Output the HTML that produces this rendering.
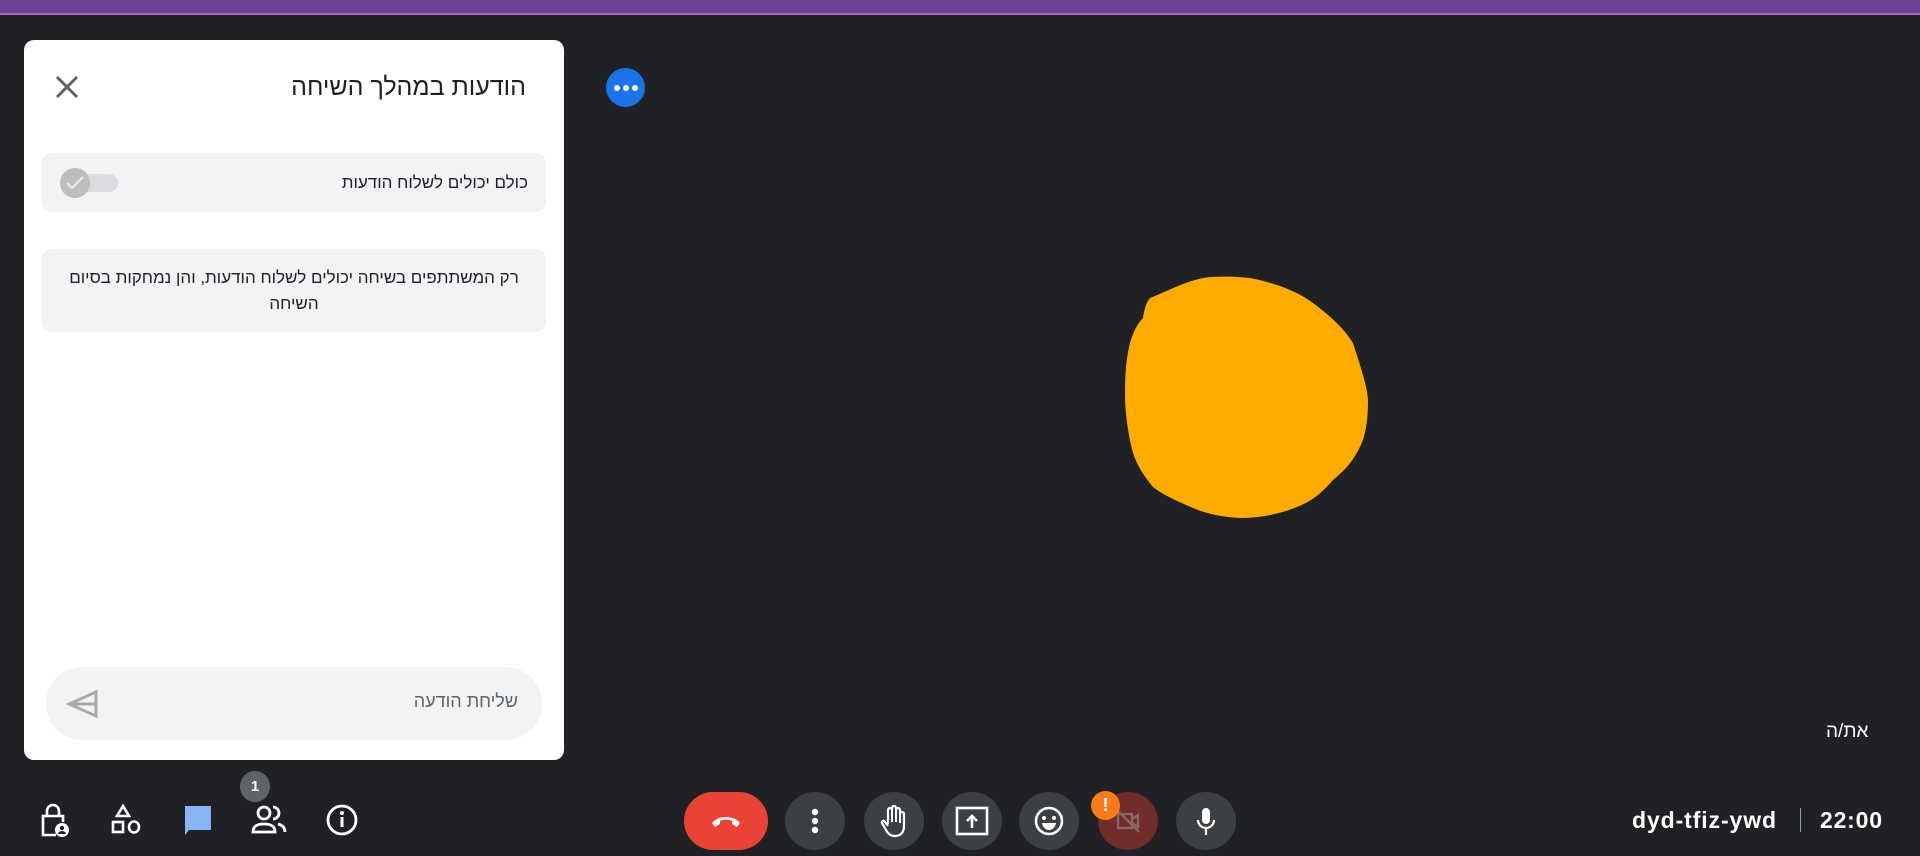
<!DOCTYPE html>
<html><head><meta charset="utf-8"><style>
*{margin:0;padding:0;box-sizing:border-box}
body{width:1920px;height:856px;background:#202124;position:relative;overflow:hidden;font-family:"Liberation Sans","Noto Sans CJK SC",sans-serif}
.top{position:absolute;left:0;top:0;width:1920px;height:15px;background:#6e4397;border-bottom:2px solid #9b6cc4}
.panel{position:absolute;left:24px;top:40px;width:540px;height:720px;background:#fff;border-radius:10px}
.title{position:absolute;right:38px;top:33px;font-size:25px;color:#202124;direction:rtl}
.card{position:absolute;background:#f1f3f4;border-radius:10px;direction:rtl;color:#202124}
.abs{position:absolute}
.cb{position:absolute;top:792px;width:60px;height:58px;border-radius:50%;background:#3c4043;display:flex;align-items:center;justify-content:center}
.li{position:absolute;top:800px;width:40px;height:40px;display:flex;align-items:center;justify-content:center}
</style></head><body>
<div class="top"></div>
<div class="panel">
  <svg class="abs" style="left:30px;top:34px" width="26" height="26" viewBox="0 0 26 26"><path d="M3 3L23 23M23 3L3 23" stroke="#5f6368" stroke-width="3"/></svg>
  <div class="title">הודעות במהלך השיחה</div>
  <div class="card" style="left:18px;top:113px;width:504px;height:59px">
    <div class="abs" style="right:18px;top:20px;font-size:17px">כולם יכולים לשלוח הודעות</div>
    <div class="abs" style="left:22px;top:21px;width:54px;height:18px;border-radius:9px;background:#dadce0"></div>
    <div class="abs" style="left:18px;top:15px;width:30px;height:30px;border-radius:50%;background:#bdbdbd"></div>
    <svg class="abs" style="left:22px;top:20px" width="22" height="20" viewBox="0 0 22 20"><path d="M3 10l5 5L19 4" stroke="#e8e8e8" stroke-width="2.2" fill="none"/></svg>
  </div>
  <div class="card" style="left:18px;top:209px;width:504px;height:83px;text-align:center;font-size:17px;line-height:26px;padding:16px 16px 0">רק המשתתפים בשיחה יכולים לשלוח הודעות, והן נמחקות בסיום השיחה</div>
  <div class="card" style="left:22px;top:627px;width:496px;height:73px;border-radius:37px">
    <div class="abs" style="right:24px;top:24px;font-size:18px;color:#5f6368">שליחת הודעה</div>
    <svg class="abs" style="left:20px;top:22px" width="34" height="30" viewBox="0 0 34 30"><path d="M30 3L3 15L30 27Z M30 3V27M4 15L30 15" stroke="#aaa" stroke-width="3" fill="none"/></svg>
  </div>
</div>
<div class="abs" style="left:606px;top:68px;width:39px;height:39px;border-radius:50%;background:#1a73e8;display:flex;align-items:center;justify-content:center;gap:3px">
  <i style="width:6px;height:6px;border-radius:50%;background:#fff"></i><i style="width:6px;height:6px;border-radius:50%;background:#fff"></i><i style="width:6px;height:6px;border-radius:50%;background:#fff"></i>
</div>
<svg class="abs" style="left:0;top:0" width="1920" height="856"><path d="M1150 298C1170 290 1190 279 1210 277C1230 276 1240 277 1250 278C1280 284 1300 293 1313 303C1333 318 1345 330 1353 343C1360 365 1367 385 1368 400C1368 420 1366 430 1363 440C1355 460 1345 470 1333 480C1320 495 1310 502 1297 507C1280 514 1260 518 1240 518C1220 517 1205 513 1193 508C1175 500 1163 495 1153 487C1143 475 1137 465 1133 453C1127 430 1125 410 1125 393C1125 370 1127 355 1130 343C1134 330 1138 323 1143 318C1144 310 1146 303 1150 298Z" fill="#ffab00"/></svg>
<div class="abs" style="left:1826px;top:721px;font-size:19px;color:#fff;direction:rtl">את/ה</div>
<div class="li" style="left:35px"><svg width="32" height="36" viewBox="0 0 32 36"><path d="M8 14V9a6 6 0 0 1 12 0v5M17 33H4V14h20v6" stroke="#fff" stroke-width="2.6" fill="none"/><circle cx="23" cy="28" r="7" fill="#fff"/><circle cx="23" cy="26" r="2.2" fill="#202124"/><path d="M19 32a4 3 0 0 1 8 0" fill="#202124"/></svg></div>
<div class="li" style="left:106px"><svg width="32" height="34" viewBox="0 0 32 34"><path d="M13 3L19 13H7Z" stroke="#fff" stroke-width="2.6" fill="none"/><rect x="3" y="19" width="10" height="10" stroke="#fff" stroke-width="2.6" fill="none"/><ellipse cx="24" cy="24" rx="5" ry="5.5" stroke="#fff" stroke-width="2.6" fill="none"/></svg></div>
<div class="li" style="left:178px"><svg width="34" height="34" viewBox="0 0 34 34"><path d="M4 3h26v24H8l-4 5Z" fill="#8ab4f8"/></svg></div>
<div class="li" style="left:249px"><svg width="36" height="32" viewBox="0 0 36 32"><circle cx="13" cy="9" r="6" stroke="#fff" stroke-width="2.8" fill="none"/><path d="M2 28c0-7 6-8 11-8s11 1 11 8Z" stroke="#fff" stroke-width="2.8" fill="none"/><path d="M22 3a6 6 0 0 1 0 12M27 20c4 1 7 3 7 8" stroke="#fff" stroke-width="2.8" fill="none"/></svg></div>
<div class="abs" style="left:240px;top:771px;width:30px;height:31px;border-radius:50%;background:#5f6368;color:#fff;font-size:15px;font-weight:bold;text-align:center;line-height:31px">1</div>
<div class="li" style="left:322px"><svg width="34" height="34" viewBox="0 0 34 34"><circle cx="17" cy="17" r="14" stroke="#fff" stroke-width="2.8" fill="none"/><rect x="15.5" y="14" width="3" height="10" fill="#fff"/><circle cx="17" cy="10" r="2" fill="#fff"/></svg></div>
<div class="cb" style="left:684px;width:84px;border-radius:29px;background:#ea4335"><svg width="32" height="14" viewBox="0 0 32 14"><path d="M2 9C8 1 24 1 30 9L27 13L22 10V7C18 5 14 5 10 7V10L5 13Z" fill="#fff"/></svg></div>
<div class="cb" style="left:785px"><svg width="8" height="26" viewBox="0 0 8 26"><circle cx="4" cy="4" r="3.2" fill="#fff"/><circle cx="4" cy="13" r="3.2" fill="#fff"/><circle cx="4" cy="22" r="3.2" fill="#fff"/></svg></div>
<div class="cb" style="left:864px"><svg width="28" height="34" viewBox="0 0 28 34"><path d="M8 20V6a2 2 0 0 1 4 0V4a2 2 0 0 1 4 0v2a2 2 0 0 1 4 0v4a2 2 0 0 1 4 0v12c0 7-4 10-9 10-4 0-7-2-9-6l-4-7c-1-2 2-3 3-1l3 4" stroke="#fff" stroke-width="2.2" fill="none"/><path d="M12 6v12M16 5v13M20 9v10" stroke="#fff" stroke-width="2"/></svg></div>
<div class="cb" style="left:942px"><svg width="34" height="30" viewBox="0 0 34 30"><rect x="2" y="2" width="30" height="26" stroke="#fff" stroke-width="2.6" fill="none"/><path d="M17 22V11M12 15l5-5 5 5" stroke="#fff" stroke-width="2.6" fill="none"/></svg></div>
<div class="cb" style="left:1019px"><svg width="32" height="32" viewBox="0 0 32 32"><circle cx="16" cy="16" r="13" stroke="#fff" stroke-width="2.6" fill="none"/><circle cx="11" cy="13" r="2" fill="#fff"/><circle cx="21" cy="13" r="2" fill="#fff"/><path d="M9 18h14c-1 5-4 7-7 7s-6-2-7-7Z" fill="#fff"/></svg></div>
<div class="cb" style="left:1098px;background:#6f2c2a"><svg width="28" height="28" viewBox="0 0 28 28"><path d="M4 7h14v14H4Z M18 12l6-4v12l-6-4" stroke="#8a6563" stroke-width="2.4" fill="none"/><path d="M3 3L25 25" stroke="#8a6563" stroke-width="2.4"/></svg></div>
<div class="abs" style="left:1091px;top:791px;width:29px;height:29px;border-radius:50%;background:#fa7b17;color:#fff;font-weight:bold;font-size:18px;text-align:center;line-height:29px">!</div>
<div class="cb" style="left:1176px"><svg width="20" height="30" viewBox="0 0 20 30"><rect x="6" y="2" width="8" height="16" rx="4" fill="#fff"/><path d="M2 14a8 8 0 0 0 16 0M10 22v7" stroke="#fff" stroke-width="2.2" fill="none"/></svg></div>
<div class="abs" style="left:1632px;top:807px;font-size:23px;font-weight:bold;color:#fff;letter-spacing:0.9px">dyd-tfiz-ywd</div>
<div class="abs" style="left:1800px;top:808px;width:1px;height:24px;background:#9aa0a6"></div>
<div class="abs" style="left:1820px;top:807px;font-size:23px;font-weight:bold;color:#fff;letter-spacing:0.8px">22:00</div>
</body></html>
